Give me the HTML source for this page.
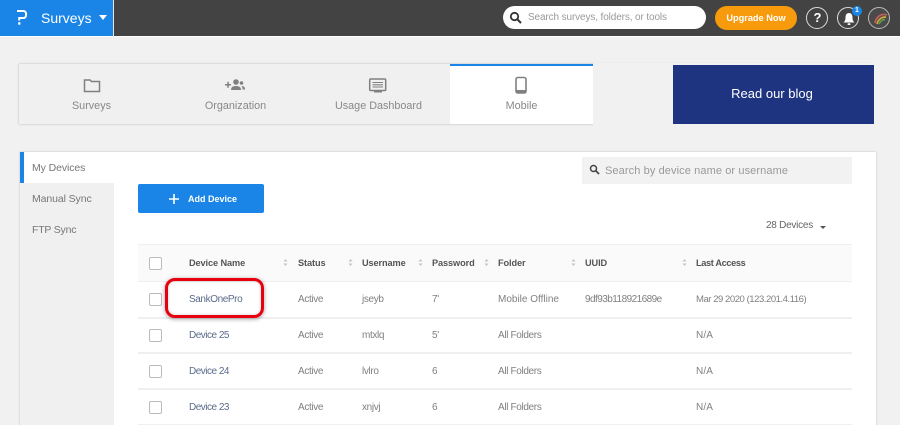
<!DOCTYPE html>
<html><head><meta charset="utf-8"><style>
html,body{margin:0;padding:0;width:900px;height:425px;overflow:hidden}
body{position:relative;background:#f1f1f1;font-family:"Liberation Sans",sans-serif;color:#777}
div,span,svg{position:absolute;display:block}
#w{left:0;top:0;width:900px;height:425px;overflow:hidden;background:#f1f1f1}
.t{white-space:nowrap;line-height:14px;font-size:10px;letter-spacing:-.35px;color:#808080}
.h{font-weight:bold;color:#555;font-size:9.2px;letter-spacing:-.1px}
.l{color:#5a6c8c;font-size:10px;letter-spacing:-.5px}
.tab{font-size:10.800px;letter-spacing:0;color:#888;text-align:center}
.side{font-size:10.500px;letter-spacing:-.1px;color:#777}
.line{left:138px;width:714px;height:2px;background:#efefef}
.cb{left:149px;width:11px;height:11px;border:1px solid #bbb;border-radius:2px;background:#fff}
.s{width:5px;height:9px}
</style></head><body><div id="w">
<div style="left:0;top:0;width:900px;height:36px;background:#434343;border-bottom:1px solid #fff"></div>
<div style="left:0;top:0;width:113px;height:36px;background:#1a85e6"></div>
<div style="left:113px;top:0;width:1px;height:37px;background:#e8e8e8"></div>
<svg style="left:16px;top:9px" width="13" height="17" viewBox="0 0 13 17"><path d="M1 2H7.500C11 2 11 9 7.500 9H3.200V11.500" fill="none" stroke="#fff" stroke-width="2"/><rect x="2.200" y="13.200" width="2.200" height="2.500" fill="#fff"/></svg>
<div class="t" style="left:41px;top:10px;font-size:14px;letter-spacing:0;line-height:16px;color:#fff">Surveys</div>
<div style="left:99px;top:15px;width:0;height:0;border:4px solid transparent;border-top:5px solid #fff;border-bottom:0"></div>

<div style="left:503px;top:6px;width:203px;height:23px;border-radius:12px;background:#fff"></div>
<svg style="left:509px;top:11px" width="13" height="13" viewBox="0 0 13 13"><circle cx="5.500" cy="5.500" r="3.700" fill="none" stroke="#333" stroke-width="1.800"/><path d="M8.500 8.500L12 12" stroke="#333" stroke-width="2"/></svg>
<div class="t" style="left:528px;top:11px;font-size:10px;letter-spacing:-.12px;color:#999">Search surveys, folders, or tools</div>
<div style="left:715px;top:6px;width:82px;height:24px;border-radius:12px;background:#f79b0c"></div>
<div class="t" style="left:715px;top:11px;width:82px;text-align:center;font-size:9.200px;letter-spacing:0;font-weight:bold;color:#fff">Upgrade Now</div>
<div style="left:806px;top:7px;width:20px;height:20px;border:1.500px solid #ddd;border-radius:50%"></div>
<div class="t" style="left:806px;top:10px;width:23px;text-align:center;font-size:13px;letter-spacing:0;line-height:16px;font-weight:bold;color:#fff">?</div>
<div style="left:837px;top:7px;width:20px;height:20px;border:1.500px solid #ddd;border-radius:50%"></div>
<svg style="left:842px;top:12px" width="14" height="14" viewBox="0 0 14 14"><path d="M7 1C4.500 1 3.500 3 3.500 5.500S3 9 1.500 10.500H12.500C11 9 10.500 8 10.500 5.500S9.500 1 7 1Z" fill="#fff"/><rect x="5.500" y="11.200" width="3" height="1.800" rx="1" fill="#fff"/></svg>
<div style="left:852px;top:6px;width:10px;height:10px;border-radius:50%;background:#1a85e6;color:#fff;font-size:7px;line-height:10px;text-align:center;font-weight:bold">1</div>
<div style="left:868px;top:7px;width:20px;height:20px;border:1.500px solid #bbb;border-radius:50%;background:#4a4a4a"></div>
<svg style="left:872px;top:10px" width="18" height="17" viewBox="0 0 18 17" fill="none" stroke-width="1.700"><path d="M3 13C4 7 9 3 15 5" stroke="#c0605a"/><path d="M5 14C6 10 9 7 14 7" stroke="#d9a53c"/><path d="M7 14C8 12 10 9.500 13 9.500" stroke="#5a9e4d"/></svg>

<!-- tabs -->
<div style="left:19px;top:64px;width:855px;height:60px;background:#f0f0f0;box-shadow:0 0 2px rgba(0,0,0,.25)"></div>
<div style="left:450px;top:64px;width:143px;height:60px;background:#fff;border-top:2px solid #1a85e6;box-sizing:border-box"></div>
<div style="left:593px;top:63px;width:307px;height:63px;background:#f1f1f1"></div>
<div style="left:673px;top:65px;width:201px;height:59px;background:#1e3480"></div>
<div class="t" style="left:673px;top:86px;width:198px;text-align:center;font-size:13px;letter-spacing:0;line-height:16px;color:#fff">Read our blog</div>
<svg style="left:83px;top:78px" width="18" height="15" viewBox="0 0 18 15"><path d="M1.500 2H7L8.500 3.500H16.500V13.500H1.500Z" fill="none" stroke="#808080" stroke-width="1.500"/></svg>
<div class="t tab" style="left:19px;top:99px;width:145px">Surveys</div>
<svg style="left:224px;top:78px" width="22" height="15" viewBox="0 0 22 15" fill="#808080"><rect x="1" y="6" width="6" height="1.500"/><rect x="3.300" y="3.800" width="1.500" height="6"/><circle cx="12" cy="4" r="2.800"/><path d="M7 12C7 9 9 8 12 8S17 9 17 12Z"/><circle cx="17.500" cy="5" r="1.800"/><path d="M18 8C20 8 21 9.500 21 11.500H18.500C18.500 10 18.500 9 17.500 8Z"/></svg>
<div class="t tab" style="left:163px;top:99px;width:145px">Organization</div>
<svg style="left:368px;top:77px" width="20" height="18" viewBox="0 0 20 18"><rect x="1.700" y="2" width="16" height="11.500" rx="1" fill="none" stroke="#808080" stroke-width="1.500"/><path d="M4.500 5.500H15M4.500 7.800H15M4.500 10H15" stroke="#808080" stroke-width="1.100"/><rect x="6" y="14" width="8" height="1.500" fill="#808080"/></svg>
<div class="t tab" style="left:306px;top:99px;width:145px">Usage Dashboard</div>
<svg style="left:514px;top:76px" width="14" height="19" viewBox="0 0 14 19"><rect x="2" y="1.500" width="10" height="15.500" rx="1.800" fill="none" stroke="#808080" stroke-width="1.600"/><rect x="2" y="14" width="10" height="3" fill="#808080"/></svg>
<div class="t tab" style="left:450px;top:99px;width:143px">Mobile</div>

<!-- panel -->
<div style="left:20px;top:152px;width:856px;height:280px;background:#fff;box-shadow:0 0 2px rgba(0,0,0,.22)"></div>
<div style="left:20px;top:183px;width:94px;height:250px;background:#f0f0f0"></div>
<div style="left:20px;top:152px;width:4px;height:31px;background:#1a85e6"></div>
<div class="t side" style="left:32px;top:161px">My Devices</div>
<div class="t side" style="left:32px;top:192px">Manual Sync</div>
<div class="t side" style="left:32px;top:223px;letter-spacing:-.2px">FTP Sync</div>

<div style="left:582px;top:157px;width:270px;height:27px;background:#f2f2f2"></div>
<svg style="left:589px;top:164px" width="11" height="11" viewBox="0 0 11 11"><circle cx="4.500" cy="4.500" r="3" fill="none" stroke="#444" stroke-width="1.500"/><path d="M7 7L10 10" stroke="#444" stroke-width="1.700"/></svg>
<div class="t" style="left:605px;top:164px;font-size:11px;letter-spacing:.1px;color:#999">Search by device name or username</div>

<div style="left:138px;top:184px;width:126px;height:29px;border-radius:2px;background:#1a85e6"></div>
<svg style="left:168px;top:193px" width="12" height="12" viewBox="0 0 12 12"><path d="M6 1V11M1 6H11" stroke="#fff" stroke-width="1.600"/></svg>
<div class="t" style="left:188px;top:192px;font-size:9px;letter-spacing:0;font-weight:bold;color:#fff">Add Device</div>

<div class="t" style="left:766px;top:219px;font-size:10px;letter-spacing:-.25px;color:#666">28 Devices</div>
<div style="left:820px;top:226px;width:0;height:0;border:3px solid transparent;border-top:3px solid #555;border-bottom:0"></div>

<!-- table -->
<div style="left:138px;top:244px;width:714px;height:37px;background:#fafafa"></div>
<div class="line" style="top:244px;height:1px"></div>
<div class="line" style="top:281px;height:1px"></div>
<div class="line" style="top:317px"></div>
<div class="line" style="top:352px"></div>
<div class="line" style="top:388px"></div>
<div class="line" style="top:424px"></div>

<div class="cb" style="top:257px"></div><div class="cb" style="top:293px"></div><div class="cb" style="top:329px"></div><div class="cb" style="top:365px"></div><div class="cb" style="top:401px"></div>

<div class="t h" style="left:189px;top:256px">Device Name</div>
<div class="t h" style="left:298px;top:256px">Status</div>
<div class="t h" style="left:362px;top:256px">Username</div>
<div class="t h" style="left:432px;top:256px">Password</div>
<div class="t h" style="left:498px;top:256px">Folder</div>
<div class="t h" style="left:585px;top:256px">UUID</div>
<div class="t h" style="left:696px;top:256px;letter-spacing:-.35px">Last Access</div>

<svg width="0" height="0"><defs><symbol id="so" viewBox="0 0 5 9"><path d="M.5 3.500L2.500 1L4.500 3.500ZM.5 5.500L2.500 8L4.500 5.500Z" fill="#c4c4c4"/></symbol></defs></svg>
<svg class="s" style="left:283px;top:258px"><use href="#so"/></svg>
<svg class="s" style="left:348px;top:258px"><use href="#so"/></svg>
<svg class="s" style="left:418px;top:258px"><use href="#so"/></svg>
<svg class="s" style="left:484px;top:258px"><use href="#so"/></svg>
<svg class="s" style="left:571px;top:258px"><use href="#so"/></svg>
<svg class="s" style="left:682px;top:258px"><use href="#so"/></svg>

<div class="t l" style="left:189px;top:293px;letter-spacing:-.4px">SankOnePro</div>
<div class="t" style="left:298px;top:293px">Active</div>
<div class="t" style="left:362px;top:293px">jseyb</div>
<div class="t" style="left:432px;top:293px">7'</div>
<div class="t" style="left:498px;top:293px;letter-spacing:0">Mobile Offline</div>
<div class="t" style="left:585px;top:293px;letter-spacing:-.55px">9df93b118921689e</div>
<div class="t" style="left:696px;top:293px;font-size:9.500px;letter-spacing:-.45px">Mar 29 2020 (123.201.4.116)</div>

<div class="t l" style="left:189px;top:329px">Device 25</div>
<div class="t" style="left:298px;top:329px">Active</div>
<div class="t" style="left:362px;top:329px">mtxlq</div>
<div class="t" style="left:432px;top:329px">5'</div>
<div class="t" style="left:498px;top:329px">All Folders</div>
<div class="t" style="left:696px;top:329px;letter-spacing:.1px">N/A</div>

<div class="t l" style="left:189px;top:365px">Device 24</div>
<div class="t" style="left:298px;top:365px">Active</div>
<div class="t" style="left:362px;top:365px">lvlro</div>
<div class="t" style="left:432px;top:365px">6</div>
<div class="t" style="left:498px;top:365px">All Folders</div>
<div class="t" style="left:696px;top:365px;letter-spacing:.1px">N/A</div>

<div class="t l" style="left:189px;top:401px">Device 23</div>
<div class="t" style="left:298px;top:401px">Active</div>
<div class="t" style="left:362px;top:401px">xnjvj</div>
<div class="t" style="left:432px;top:401px">6</div>
<div class="t" style="left:498px;top:401px">All Folders</div>
<div class="t" style="left:696px;top:401px;letter-spacing:.1px">N/A</div>

<div style="left:165px;top:278px;width:93px;height:34px;border:3px solid #e8000d;border-radius:10px;box-shadow:0 1px 4px rgba(0,0,0,.4),inset 0 0 3px rgba(0,0,0,.2)"></div>
</div></body></html>
